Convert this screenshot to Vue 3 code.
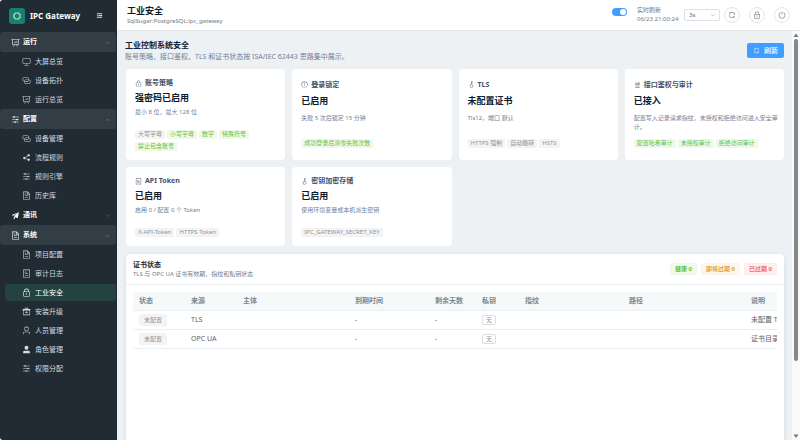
<script setup>
import { ref } from 'vue';

const icons = {
  board: 'm665.216 768 110.848 192h-73.856L591.36 768H433.024L322.176 960H248.32l110.848-192H160a32 32 0 0 1-32-32V192H64a32 32 0 0 1 0-64h896a32 32 0 1 1 0 64h-64v544a32 32 0 0 1-32 32H665.216zM832 192H192v512h640V192zM352 448a32 32 0 0 1 32 32v64a32 32 0 0 1-64 0v-64a32 32 0 0 1 32-32zm160-64a32 32 0 0 1 32 32v128a32 32 0 0 1-64 0V416a32 32 0 0 1 32-32zm160-64a32 32 0 0 1 32 32v192a32 32 0 1 1-64 0V352a32 32 0 0 1 32-32z',
  monitor: 'M544 768v128h192a32 32 0 1 1 0 64H288a32 32 0 1 1 0-64h192V768H192A128 128 0 0 1 64 640V256a128 128 0 0 1 128-128h640a128 128 0 0 1 128 128v384a128 128 0 0 1-128 128H544zM192 192a64 64 0 0 0-64 64v384a64 64 0 0 0 64 64h640a64 64 0 0 0 64-64V256a64 64 0 0 0-64-64H192z',
  connection: 'M640 384v64H448a128 128 0 0 0-128 128v128a128 128 0 0 0 128 128h320a128 128 0 0 0 128-128V576a128 128 0 0 0-64-110.848V394.88c74.56 26.368 128 97.472 128 181.056v128a192 192 0 0 1-192 192H448a192 192 0 0 1-192-192V576a192 192 0 0 1 192-192h192zM384 640v-64h192a128 128 0 0 0 128-128V320a128 128 0 0 0-128-128H256a128 128 0 0 0-128 128v128a128 128 0 0 0 64 110.848v70.272A192.064 192.064 0 0 1 64 448V320a192 192 0 0 1 192-192h320a192 192 0 0 1 192 192v128a192 192 0 0 1-192 192H384z',
  share: 'm679.872 348.8-301.76 188.608a127.808 127.808 0 0 1 5.12 52.16l279.936 104.96a128 128 0 1 1-22.464 59.904l-279.872-104.96a128 128 0 1 1-16.64-166.272l301.696-188.608a128 128 0 1 1 33.92 54.272z',
  operation: 'M389.44 768a96.064 96.064 0 0 1 181.12 0H896v64H570.56a96.064 96.064 0 0 1-181.12 0H128v-64h261.44zm192-288a96.064 96.064 0 0 1 181.12 0H896v64H762.56a96.064 96.064 0 0 1-181.12 0H128v-64h453.44zm-320-288a96.064 96.064 0 0 1 181.12 0H896v64H442.56a96.064 96.064 0 0 1-181.12 0H128v-64h133.44z',
  document: 'M832 384H576V128H192v768h640V384zm-26.496-64L640 154.496V320h165.504zM160 64h480l256 256v608a32 32 0 0 1-32 32H160a32 32 0 0 1-32-32V96a32 32 0 0 1 32-32zm160 448h384v64H320v-64zm0-192h160v64H320v-64zm0 384h384v64H320v-64z',
  tickets: 'M192 128v768h640V128H192zm-32-64h704a32 32 0 0 1 32 32v832a32 32 0 0 1-32 32H160a32 32 0 0 1-32-32V96a32 32 0 0 1 32-32zm160 448h384v64H320v-64zm0-192h192v64H320v-64zm0 384h384v64H320v-64z',
  promotion: 'm64 448 832-320-128 704-446.08-243.328L832 192 242.816 545.536 64 448zm256 512V657.024L512 768 320 960z',
  lock: 'M224 448a32 32 0 0 0-32 32v384a32 32 0 0 0 32 32h576a32 32 0 0 0 32-32V480a32 32 0 0 0-32-32H224zm0-64h576a96 96 0 0 1 96 96v384a96 96 0 0 1-96 96H224a96 96 0 0 1-96-96V480a96 96 0 0 1 96-96zM512 544a32 32 0 0 1 32 32v192a32 32 0 1 1-64 0V576a32 32 0 0 1 32-32zm192-160v-64a192 192 0 1 0-384 0v64h384zM512 64a256 256 0 0 1 256 256v128H256V320A256 256 0 0 1 512 64z',
  box: 'M320 224V96h384v128h224a32 32 0 0 1 32 32v96a32 32 0 0 1-32 32h-32v512a32 32 0 0 1-32 32H160a32 32 0 0 1-32-32V384H96a32 32 0 0 1-32-32v-96a32 32 0 0 1 32-32h224zm64 0h256v-64H384v64zM192 384v480h640V384H192zm288 64h64v180l74-74 46 46-152 152-152-152 46-46 74 74V448z',
  user: 'M512 512a192 192 0 1 0 0-384 192 192 0 0 0 0 384zm0 64a256 256 0 1 1 0-512 256 256 0 0 1 0 512zm320 320v-96a96 96 0 0 0-96-96H288a96 96 0 0 0-96 96v96a32 32 0 1 1-64 0v-96a160 160 0 0 1 160-160h448a160 160 0 0 1 160 160v96a32 32 0 1 1-64 0z',
  userFilled: 'M288 320a224 224 0 1 0 448 0 224 224 0 1 0-448 0zm544 608H160a32 32 0 0 1-32-32v-96a160 160 0 0 1 160-160h448a160 160 0 0 1 160 160v96a32 32 0 0 1-32 32z',
  key: 'M448 456.064V96a32 32 0 0 1 32-32.064L672 64a32 32 0 0 1 0 64H512v128h160a32 32 0 0 1 0 64H512v128a256 256 0 1 1-64 8.064zM512 896a192 192 0 1 0 0-384 192 192 0 0 0 0 384z',
  warning: 'M512 64a448 448 0 1 1 0 896 448 448 0 0 1 0-896zm0 832a384 384 0 0 0 0-768 384 384 0 0 0 0 768zm48-176a48 48 0 1 1-96 0 48 48 0 1 1 96 0zm-48-464a32 32 0 0 1 32 32v288a32 32 0 0 1-64 0V288a32 32 0 0 1 32-32z',
  setup: 'M192 128h256v64H192v-64zm384-32h64v32h224v64H640v32h-64V96zM160 320h96v-32h64v128h-64v-32h-96v-64zm256 0h448v64H416v-64zM192 512h640v64H192v-64zm0 192h288v-48h64v160h-64v-48H192v-64zm448 0h192v64H640v-64zM192 880h640v64H192v-64z',
  refresh: 'M771.776 794.88A384 384 0 0 1 128 512h64a320 320 0 0 0 555.712 216.448H654.72a32 32 0 1 1 0-64h149.056a32 32 0 0 1 32 32v148.928a32 32 0 1 1-64 0v-50.56zM276.288 295.616h92.992a32 32 0 0 1 0 64H220.16a32 32 0 0 1-32-32V178.56a32 32 0 0 1 64 0v50.56A384 384 0 0 1 896.128 512h-64a320 320 0 0 0-555.776-216.384z',
  power: 'M352 159.872V230.4a352 352 0 1 0 320 0v-70.528A416.128 416.128 0 0 1 512 960a416 416 0 0 1-160-800.128zM512 64q32 0 32 32v320q0 32-32 32t-32-32V96q0-32 32-32z',
  fold: 'M896 192H128v128h768V192zm0 256H384v128h512V448zm0 256H128v128h768V704zM320 384 128 512l192 128V384z',
  up: 'm488.832 344.32-339.84 356.672a32 32 0 0 0 0 44.16l.384.384a29.44 29.44 0 0 0 42.688 0l320-335.872 319.872 335.872a29.44 29.44 0 0 0 42.688 0l.384-.384a32 32 0 0 0 0-44.16L535.168 344.32a32 32 0 0 0-46.336 0z',
  down: 'M831.872 340.864 512 652.672 192.128 340.864a30.592 30.592 0 0 0-42.752 0 29.12 29.12 0 0 0 0 41.6L489.664 714.24a32 32 0 0 0 44.672 0l340.288-331.712a29.12 29.12 0 0 0 0-41.728 30.592 30.592 0 0 0-42.752 0z',
};

const menu = [
  {
    title: '运行', icon: 'board', open: true,
    children: [
      { title: '大屏总览', icon: 'monitor' },
      { title: '设备拓扑', icon: 'connection' },
      { title: '运行总览', icon: 'board' },
    ],
  },
  {
    title: '配置', icon: 'operation', open: true,
    children: [
      { title: '设备管理', icon: 'connection' },
      { title: '流程规则', icon: 'share' },
      { title: '规则引擎', icon: 'operation' },
      { title: '历史库', icon: 'document' },
    ],
  },
  { title: '通讯', icon: 'promotion', open: false, children: [] },
  {
    title: '系统', icon: 'document', open: true,
    children: [
      { title: '项目配置', icon: 'document' },
      { title: '审计日志', icon: 'tickets' },
      { title: '工业安全', icon: 'lock', active: true },
      { title: '安装升级', icon: 'box' },
      { title: '人员管理', icon: 'user' },
      { title: '角色管理', icon: 'userFilled' },
      { title: '权限分配', icon: 'operation' },
    ],
  },
];

const cards = [
  {
    title: '账号策略', icon: 'lock', value: '强密码已启用', desc: '最小 8 位，最大 128 位',
    tags: [['大写字母', 'info'], ['小写字母', 'success'], ['数字', 'success'], ['特殊符号', 'success'], ['禁止包含账号', 'success']],
  },
  {
    title: '登录锁定', icon: 'warning', value: '已启用', desc: '失败 5 次后锁定 15 分钟',
    tags: [['成功登录后清零失败次数', 'success']],
  },
  {
    title: 'TLS', icon: 'key', value: '未配置证书', desc: 'Tls12，端口 默认',
    tags: [['HTTPS 强制', 'info'], ['自动跳转', 'info'], ['HSTS', 'info']],
  },
  {
    title: '接口鉴权与审计', icon: 'setup', value: '已接入', desc: '配置写入记录请求指纹，未授权和拒绝访问进入安全审计。',
    tags: [['配置哈希审计', 'success'], ['未授权审计', 'success'], ['拒绝访问审计', 'success']],
  },
  {
    title: 'API Token', icon: 'tickets', value: '已启用', desc: '启用 0 / 配置 0 个 Token',
    tags: [['X-API-Token', 'info'], ['HTTPS Token', 'info']],
  },
  {
    title: '密钥加密存储', icon: 'key', value: '已启用', desc: '使用环境变量或本机派生密钥',
    tags: [['IPC_GATEWAY_SECRET_KEY', 'info']],
  },
];

const rows = [
  { source: 'TLS', note: '未配置 TLS 证书' },
  { source: 'OPC UA', note: '证书目录不存在' },
];

const live = ref(true);
const interval = ref('3s');
</script>

<template>
  <div class="app">
    <aside class="sidebar">
      <div class="brand">
        <span class="logo">
          <svg viewBox="0 0 16 16"><path d="M6.500 5h3L11 6.500v3L9.500 11h-3L5 9.500v-3z" /></svg>
        </span>
        <strong class="brand-name">IPC Gateway</strong>
        <button class="fold" aria-label="收起菜单">
          <svg class="icon" viewBox="0 0 1024 1024"><path :d="icons.fold" /></svg>
        </button>
      </div>
      <nav>
        <div v-for="group in menu" :key="group.title" class="menu-block">
          <button class="group" :class="{ open: group.open }">
            <svg class="icon" viewBox="0 0 1024 1024"><path :d="icons[group.icon]" /></svg>
            <span class="group-title">{{ group.title }}</span>
            <svg class="icon arrow" viewBox="0 0 1024 1024"><path :d="group.open ? icons.up : icons.down" /></svg>
          </button>
          <a v-for="item in group.children" :key="item.title" href="#" class="item" :class="{ active: item.active }">
            <svg class="icon" viewBox="0 0 1024 1024"><path :d="icons[item.icon]" /></svg>
            <span>{{ item.title }}</span>
          </a>
        </div>
      </nav>
    </aside>

    <div class="main">
      <header class="topbar">
        <div class="page-name">
          <h1>工业安全</h1>
          <p>SqlSugar:PostgreSQL:ipc_gateway</p>
        </div>
        <input id="live" v-model="live" type="checkbox" class="switch">
        <div class="live">
          <label for="live">实时刷新</label>
          <time>06/23 21:00:24</time>
        </div>
        <div class="select">
          <select v-model="interval" aria-label="刷新间隔">
            <option>3s</option>
            <option>5s</option>
            <option>10s</option>
          </select>
          <svg class="icon" viewBox="0 0 1024 1024"><path :d="icons.down" /></svg>
        </div>
        <div class="actions">
          <button class="round" aria-label="刷新">
            <svg class="icon" viewBox="0 0 1024 1024"><path :d="icons.refresh" /></svg>
          </button>
          <button class="round" aria-label="锁定">
            <svg class="icon" viewBox="0 0 1024 1024"><path :d="icons.lock" /></svg>
          </button>
          <button class="round" aria-label="退出">
            <svg class="icon" viewBox="0 0 1024 1024"><path :d="icons.power" /></svg>
          </button>
        </div>
      </header>

      <div class="body">
        <main class="content">
          <div class="heading">
            <div>
              <h2>工业控制系统安全</h2>
              <p>账号策略、接口鉴权、TLS 和证书状态按 ISA/IEC 62443 思路集中展示。</p>
            </div>
            <button class="primary">
              <svg class="icon" viewBox="0 0 1024 1024"><path :d="icons.refresh" /></svg>
              <span>刷新</span>
            </button>
          </div>

          <div class="cards">
            <section v-for="card in cards" :key="card.title" class="card">
              <h3>
                <svg class="icon" viewBox="0 0 1024 1024"><path :d="icons[card.icon]" /></svg>
                <span>{{ card.title }}</span>
              </h3>
              <strong class="value">{{ card.value }}</strong>
              <p class="desc">{{ card.desc }}</p>
              <div class="tags">
                <span v-for="[text, type] in card.tags" :key="text" class="tag" :class="type">{{ text }}</span>
              </div>
            </section>
          </div>

          <section class="panel">
            <div class="panel-head">
              <div>
                <h3>证书状态</h3>
                <p>TLS 与 OPC UA 证书有效期、指纹和私钥状态</p>
              </div>
              <div class="counts">
                <span class="tag large success">健康 0</span>
                <span class="tag large warning">即将过期 0</span>
                <span class="tag large danger">已过期 0</span>
              </div>
            </div>
            <div class="table-wrap">
              <table>
                <colgroup>
                  <col class="w-state"><col class="w-source"><col class="w-subject">
                  <col class="w-expire"><col class="w-days"><col class="w-key">
                  <col class="w-print"><col class="w-path"><col class="w-note">
                </colgroup>
                <thead>
                  <tr>
                    <th>状态</th>
                    <th>来源</th>
                    <th>主体</th>
                    <th>到期时间</th>
                    <th>剩余天数</th>
                    <th>私钥</th>
                    <th>指纹</th>
                    <th>路径</th>
                    <th>说明</th>
                  </tr>
                </thead>
                <tbody>
                  <tr v-for="row in rows" :key="row.source">
                    <td><span class="tag large info">未配置</span></td>
                    <td>{{ row.source }}</td>
                    <td></td>
                    <td>-</td>
                    <td>-</td>
                    <td><span class="tag plain">无</span></td>
                    <td></td>
                    <td></td>
                    <td>{{ row.note }}</td>
                  </tr>
                </tbody>
              </table>
            </div>
          </section>
        </main>

        <div class="scrollbar" aria-hidden="true">
          <svg viewBox="0 0 8 8"><path d="M4 2.500 6.500 6h-5z" /></svg>
          <div class="thumb"></div>
          <div class="rest"></div>
          <svg viewBox="0 0 8 8"><path d="M4 6 1.500 2.500h5z" /></svg>
        </div>
      </div>
    </div>
  </div>
</template>

<style>
body {
  background: #edf1f4;
}
</style>

<style scoped>
.app {
  display: flex;
  height: 100vh;
  overflow: hidden;
  font-family: "Noto Sans", "Noto Sans CJK SC", sans-serif;
  font-size: 7px;
  line-height: 10px;
  color: #606266;
}

h1, h2, h3, p {
  margin: 0;
}

button {
  font-family: inherit;
  font-size: inherit;
  line-height: inherit;
  padding: 0;
  border: none;
  background: none;
  color: inherit;
}

.icon {
  width: 9px;
  height: 9px;
  flex: none;
  fill: currentColor;
}

/* sidebar */
.sidebar {
  width: 117px;
  flex: none;
  box-sizing: border-box;
  padding-right: 1px;
  background: #212b33;
  border-radius: 3px 0 0 3px;
  color: #d3dae0;
}

.brand {
  display: flex;
  align-items: center;
  height: 32px;
  box-sizing: border-box;
  padding: 0 13px 1px 9px;
}

.logo {
  width: 16px;
  height: 16px;
  border-radius: 3px;
  background: #177f6c;
}

.logo svg {
  display: block;
  fill: none;
  stroke: #b9e3d8;
  stroke-width: 1.2;
}

.brand-name {
  flex: 1;
  margin-left: 5px;
  font-size: 8px;
  color: #fff;
}

.fold {
  display: flex;
}

.fold .icon {
  width: 7px;
  height: 7px;
}

.menu-block {
  display: grid;
}

.group {
  display: flex;
  align-items: center;
  width: 100%;
  height: 20px;
  padding: 0 6px 0 11px;
  border-radius: 3px;
  color: #fff;
}

.group.open {
  background: #333d45;
}

.group-title {
  flex: 1;
  margin-left: 3px;
  text-align: left;
  font-weight: 700;
}

.group .arrow {
  width: 5px;
  height: 5px;
  color: #9aa3aa;
}

.item {
  display: flex;
  align-items: center;
  gap: 4px;
  height: 17px;
  margin: 1px 0 1px 5px;
  padding-left: 17px;
  border-radius: 3px;
  color: #d3dae0;
  text-decoration: none;
}

.item.active {
  background: #24423f;
  color: #fff;
}

/* top bar */
.main {
  flex: 1;
  min-width: 0;
  display: flex;
  flex-direction: column;
}

.topbar {
  display: flex;
  align-items: center;
  height: 31px;
  flex: none;
  box-sizing: border-box;
  padding: 0 10px;
  background: #fff;
  border-bottom: 1px solid #e2e7eb;
}

.page-name {
  flex: 1;
}

.page-name h1 {
  font-size: 9px;
  line-height: 12px;
  color: #111c2b;
}

.page-name p {
  font-size: 6px;
  line-height: 8px;
  color: #6b7a88;
}

.switch {
  appearance: none;
  display: flex;
  align-items: center;
  justify-content: flex-end;
  width: 15px;
  height: 8px;
  box-sizing: border-box;
  margin: 0 10px 6px 0;
  padding: 1px;
  border-radius: 4px;
  background: #409eff;
}

.switch:not(:checked) {
  justify-content: flex-start;
  background: #dcdfe6;
}

.switch::before {
  content: "";
  width: 6px;
  height: 6px;
  border-radius: 50%;
  background: #fff;
}

.live {
  display: flex;
  flex-direction: column;
  width: 38px;
  margin-right: 9px;
  font-size: 6px;
  line-height: 9px;
  color: #6b7a88;
  white-space: nowrap;
}

.select {
  display: grid;
  align-items: center;
  width: 36px;
  margin-right: 4px;
}

.select select,
.select .icon {
  grid-area: 1 / 1;
}

.select select {
  appearance: none;
  width: 100%;
  height: 12px;
  padding: 0 4px;
  border: 1px solid #dcdfe6;
  border-radius: 2px;
  background: #fff;
  font-family: inherit;
  font-size: 6px;
  line-height: 10px;
  color: #606266;
}

.select .icon {
  justify-self: end;
  width: 6px;
  height: 6px;
  margin-right: 4px;
  color: #a8abb2;
  pointer-events: none;
}

.actions {
  display: flex;
  gap: 9px;
}

.round {
  display: flex;
  align-items: center;
  justify-content: center;
  width: 16px;
  height: 16px;
  box-sizing: border-box;
  border: 1px solid #e3e6eb;
  border-radius: 50%;
  background: #fff;
}

.round .icon {
  width: 8px;
  height: 8px;
}

/* content */
.body {
  flex: 1;
  min-height: 0;
  display: flex;
}

.content {
  flex: 1;
  min-width: 0;
  display: flex;
  flex-direction: column;
  padding: 8px 8px 0;
  overflow: hidden;
}

.heading {
  display: flex;
  align-items: center;
  justify-content: space-between;
  margin-bottom: 7px;
}

.heading h2 {
  font-size: 8px;
  line-height: 12px;
  color: #162033;
}

.heading p {
  line-height: 11px;
  color: #71809a;
}

.primary {
  display: flex;
  align-items: center;
  justify-content: center;
  gap: 4px;
  width: 37px;
  height: 15px;
  border-radius: 2px;
  background: #409eff;
  color: #fff;
  font-weight: 500;
}

.primary .icon {
  width: 7px;
  height: 7px;
}

.cards {
  display: grid;
  grid-template-columns: repeat(4, 1fr);
  gap: 7px;
  margin: 0 0 8px 1px;
}

.card {
  display: grid;
  gap: 4px;
  min-width: 0;
  padding: 9px 6px 9px 9px;
  border-radius: 4px;
  background: #fff;
}

.card h3 {
  display: flex;
  align-items: center;
  gap: 3px;
  font-size: 7px;
  color: #43516a;
}

.card h3 .icon {
  width: 7px;
  height: 7px;
}

.value {
  font-size: 9px;
  line-height: 12px;
  color: #0f1a2e;
}

.desc {
  min-height: 18px;
  font-size: 6px;
  line-height: 9px;
  color: #71809a;
}

.tags {
  display: flex;
  flex-wrap: wrap;
  align-content: flex-start;
  gap: 3px 2px;
}

.tag {
  padding: 0 2px;
  border: 1px solid;
  border-radius: 2px;
  font-size: 6px;
  line-height: 7px;
  white-space: nowrap;
}

.tag.large {
  display: inline-block;
  padding: 0 4px;
  line-height: 10px;
}

.tag.info {
  background: #f4f4f5;
  border-color: #f2f2f3;
  color: #909399;
}

.tag.success {
  background: #f0f9eb;
  border-color: #edf8e7;
  color: #67c23a;
}

.tag.warning {
  background: #fdf6ec;
  border-color: #fdf4e8;
  color: #e6a23c;
}

.tag.danger {
  background: #fef0f0;
  border-color: #feecec;
  color: #f56c6c;
}

.tag.plain {
  display: inline-block;
  padding: 0 3px;
  line-height: 8px;
  background: #fff;
  border-color: #dcdde0;
  color: #909399;
}

/* certificate panel */
.panel {
  flex: 1;
  margin-left: 1px;
  border-radius: 4px 4px 0 0;
  background: #fff;
  box-shadow: 0 1px 4px rgba(30, 50, 70, 0.12);
}

.panel-head {
  display: flex;
  align-items: center;
  justify-content: space-between;
  padding: 6px 7px;
  border-bottom: 1px solid #edf0f2;
}

.panel-head h3 {
  font-size: 7px;
  line-height: 10px;
  color: #1d2733;
}

.panel-head p {
  font-size: 6px;
  line-height: 8px;
  color: #71808c;
}

.counts {
  display: flex;
  gap: 4px;
  font-weight: 700;
}

.table-wrap {
  margin: 7px 7px 0;
  overflow: hidden;
}

table {
  width: 720px;
  table-layout: fixed;
  border-collapse: collapse;
}

th, td {
  height: 18px;
  padding: 0 6px;
  border-bottom: 1px solid #ebeef5;
  text-align: left;
  white-space: nowrap;
}

th {
  background: #f5f9fa;
  font-weight: 700;
  color: #7b8790;
}

.w-state, .w-source { width: 52px; }
.w-subject { width: 112px; }
.w-expire { width: 80px; }
.w-days { width: 47px; }
.w-key { width: 43px; }
.w-print { width: 104px; }
.w-path { width: 122px; }
.w-note { width: 108px; }

/* scrollbar */
.scrollbar {
  width: 8px;
  flex: none;
  display: flex;
  flex-direction: column;
  align-items: center;
  background: #fafafa;
}

.scrollbar svg {
  width: 8px;
  height: 8px;
  fill: #777;
}

.thumb {
  flex: 81;
  width: 4px;
  border-radius: 2px;
  background: #888;
}

.rest {
  flex: 18;
}
</style>
